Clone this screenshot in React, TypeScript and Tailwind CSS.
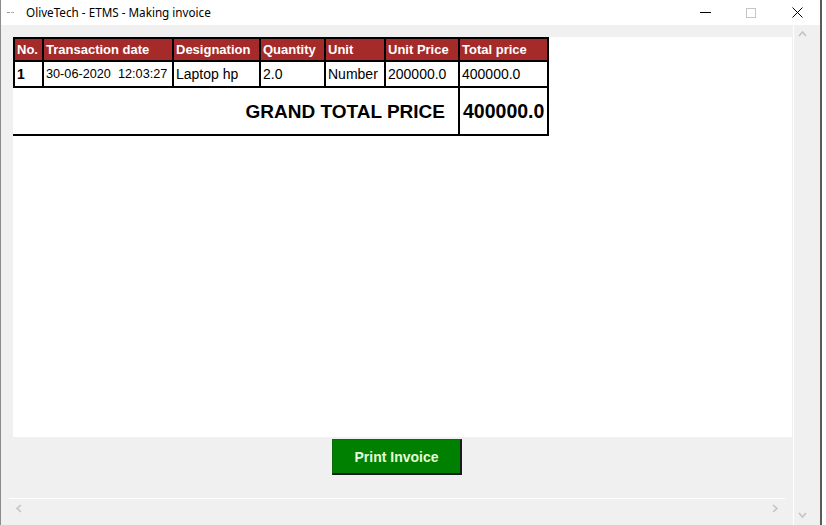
const Chevron = ({ dir }: { dir: "up" | "down" | "left" | "right" }) => {
  const paths: Record<string, string> = {
    up: "M1 6 L4.5 2 L8 6",
    down: "M1 2 L4.5 6 L8 2",
    left: "M6 1 L2 4.5 L6 8",
    right: "M2 1 L6 4.5 L2 8",
  };
  const horiz = dir === "left" || dir === "right";
  return (
    <svg width={horiz ? 8 : 9} height={horiz ? 9 : 8} viewBox={horiz ? "0 0 8 9" : "0 0 9 8"}>
      <path d={paths[dir]} fill="none" stroke="#c4c4c4" strokeWidth="1.6" />
    </svg>
  );
};

const headers = ["No.", "Transaction date", "Designation", "Quantity", "Unit", "Unit Price", "Total price"];

export default function App() {
  return (
    <div className="w-[826px] h-[525px] bg-white flex overflow-hidden font-['Liberation_Sans',Arial,sans-serif]">
      <div className="w-[822px] h-full flex flex-col border-l border-l-[#8c8c8c] border-r-2 border-r-[#5a5a5a]">
        {/* title bar */}
        <div className="h-[25px] bg-white flex items-center shrink-0">
          <div className="w-[25px] pl-[6px] flex items-center">
            <svg width="8" height="4" viewBox="0 0 8 4">
              <rect x="0" y="1" width="3" height="1" fill="#9a9a9a" />
              <rect x="4" y="1" width="3" height="1" fill="#b0b0b0" />
            </svg>
          </div>
          <span className="text-[11.7px] text-black font-['Noto_Sans',sans-serif] leading-none">
            OliveTech - ETMS - Making invoice
          </span>
          <div className="ml-auto flex h-full">
            <div className="w-[46px] flex items-center justify-center">
              <div className="w-[11px] h-px bg-black" />
            </div>
            <div className="w-[46px] flex items-center justify-center">
              <div className="w-[10px] h-[10px] border border-[#c6c6c6]" />
            </div>
            <div className="w-[46px] flex items-center justify-center">
              <svg width="11" height="11" viewBox="0 0 11 11">
                <path d="M0.5 0.5 L10.5 10.5 M10.5 0.5 L0.5 10.5" stroke="#000" strokeWidth="1" />
              </svg>
            </div>
          </div>
        </div>

        {/* body */}
        <div className="flex-1 flex bg-[#f0f0f0] min-h-0">
          <div className="flex-1 flex flex-col">
            <div className="pt-[12px] pl-[12px]">
              <div className="w-[779px] h-[400px] bg-white">
                <div className="w-[536px]">
                  <div className="grid grid-cols-[27px_128px_85px_63px_58px_72px_87px] grid-rows-[21px_24px] gap-[2px] p-[2px] bg-black">
                    {headers.map((h) => (
                      <div key={h} className="bg-[#a52a2a] text-white font-bold text-[13px] pl-[2px] pt-px flex items-center whitespace-nowrap">
                        {h}
                      </div>
                    ))}
                    <div className="bg-white text-[14px] font-bold pl-[2px] flex items-center">1</div>
                    <div className="bg-white text-[12.7px] pl-[2px] pt-[2px] flex items-center whitespace-pre">{"30-06-2020\u00a0\u00a012:03:27"}</div>
                    <div className="bg-white text-[14px] pl-[2px] flex items-center">Laptop hp</div>
                    <div className="bg-white text-[14px] pl-[2px] flex items-center">2.0</div>
                    <div className="bg-white text-[14px] pl-[2px] flex items-center">Number</div>
                    <div className="bg-white text-[14px] pl-[2px] flex items-center">200000.0</div>
                    <div className="bg-white text-[14px] pl-[2px] flex items-center">400000.0</div>
                  </div>
                  <div className="flex h-[48px]">
                    <div className="w-[445px] border-b-2 border-black flex items-center justify-end pr-[13px] pt-[2px] text-[19px] font-bold text-black whitespace-nowrap">
                      GRAND TOTAL PRICE
                    </div>
                    <div className="w-[91px] border-x-2 border-b-2 border-black flex items-center pl-[3px] pt-[2px] text-[19.5px] font-bold text-black">
                      400000.0
                    </div>
                  </div>
                </div>
              </div>
            </div>
            <div className="flex justify-center mt-[2px]">
              <button className="w-[130px] h-[36px] bg-[#008000] border-t border-l border-t-[#0c6a0c] border-l-[#0c6a0c] border-r-2 border-b-2 border-r-[#1c1c1c] border-b-[#1c1c1c] text-[#e4fcd8] font-bold text-[14px] pt-[2px] flex items-center justify-center">
                Print Invoice
              </button>
            </div>
            <div className="mt-auto ml-[8px] w-[776px] h-[27px] border-t border-white">
              <div className="h-[18px] flex items-center justify-between px-[6px]">
                <Chevron dir="left" />
                <Chevron dir="right" />
              </div>
            </div>
          </div>
          <div className="w-[27px] border-l border-white flex flex-col justify-between pt-[5px] pb-[6px] pl-[4px]">
            <Chevron dir="up" />
            <Chevron dir="down" />
          </div>
        </div>
      </div>
    </div>
  );
}
